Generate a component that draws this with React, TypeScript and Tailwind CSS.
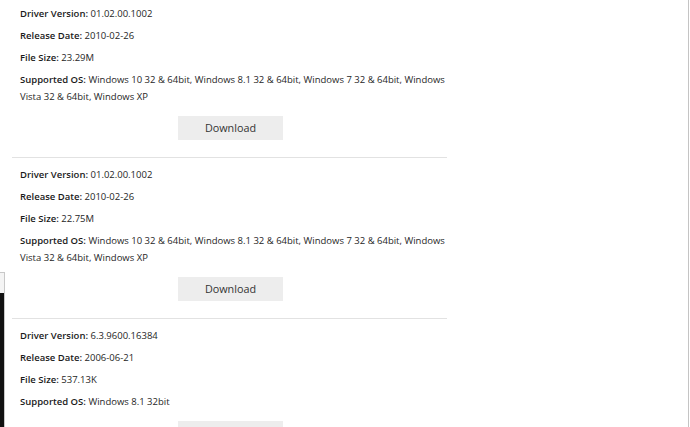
import React from "react";

type Driver = {
  version: string;
  date: string;
  size: string;
  os: string;
};

const drivers: Driver[] = [
  {
    version: "01.02.00.1002",
    date: "2010-02-26",
    size: "23.29M",
    os: "Windows 10 32 & 64bit, Windows 8.1 32 & 64bit, Windows 7 32 & 64bit, Windows Vista 32 & 64bit, Windows XP",
  },
  {
    version: "01.02.00.1002",
    date: "2010-02-26",
    size: "22.75M",
    os: "Windows 10 32 & 64bit, Windows 8.1 32 & 64bit, Windows 7 32 & 64bit, Windows Vista 32 & 64bit, Windows XP",
  },
  {
    version: "6.3.9600.16384",
    date: "2006-06-21",
    size: "537.13K",
    os: "Windows 8.1 32bit",
  },
];

function Row({ label, value }: { label: string; value: string }) {
  return (
    <p className="mb-[5px] leading-[17px] text-[#262626]">
      <span className="font-semibold text-[#1a1a1a]">{label}:</span> {value}
    </p>
  );
}

export default function App() {
  return (
    <div
      className="relative h-[427px] w-[690px] overflow-hidden bg-white text-[9.5px]"
      style={{ fontFamily: '"Open Sans", "Noto Sans", Arial, sans-serif' }}
    >
      <div className="-mt-[4px] ml-[12px] w-[435px]">
        {drivers.map((d, i) => (
          <div key={i} className="border-t border-[#e2e2e2] pt-[8px] pr-[2px] pb-[17px] pl-[8px]">
            <Row label="Driver Version" value={d.version} />
            <Row label="Release Date" value={d.date} />
            <Row label="File Size" value={d.size} />
            <Row label="Supported OS" value={d.os} />
            <div className="mt-[11px] flex justify-center pr-[4px]">
              <button className="h-[24px] w-[105px] bg-[#ededed] text-[10.8px] text-[#333]">
                Download
              </button>
            </div>
          </div>
        ))}
      </div>
      <div className="absolute top-[272px] left-0 h-[160px] w-[5px] border-t border-r border-[#c8c8c8] bg-[#f4f4f4]">
        <div className="mt-[20px] h-full w-[4px] bg-[#111]" />
      </div>
      <div className="absolute top-0 right-[1px] h-full w-[1px] bg-[#c4c4c4]" />
    </div>
  );
}
